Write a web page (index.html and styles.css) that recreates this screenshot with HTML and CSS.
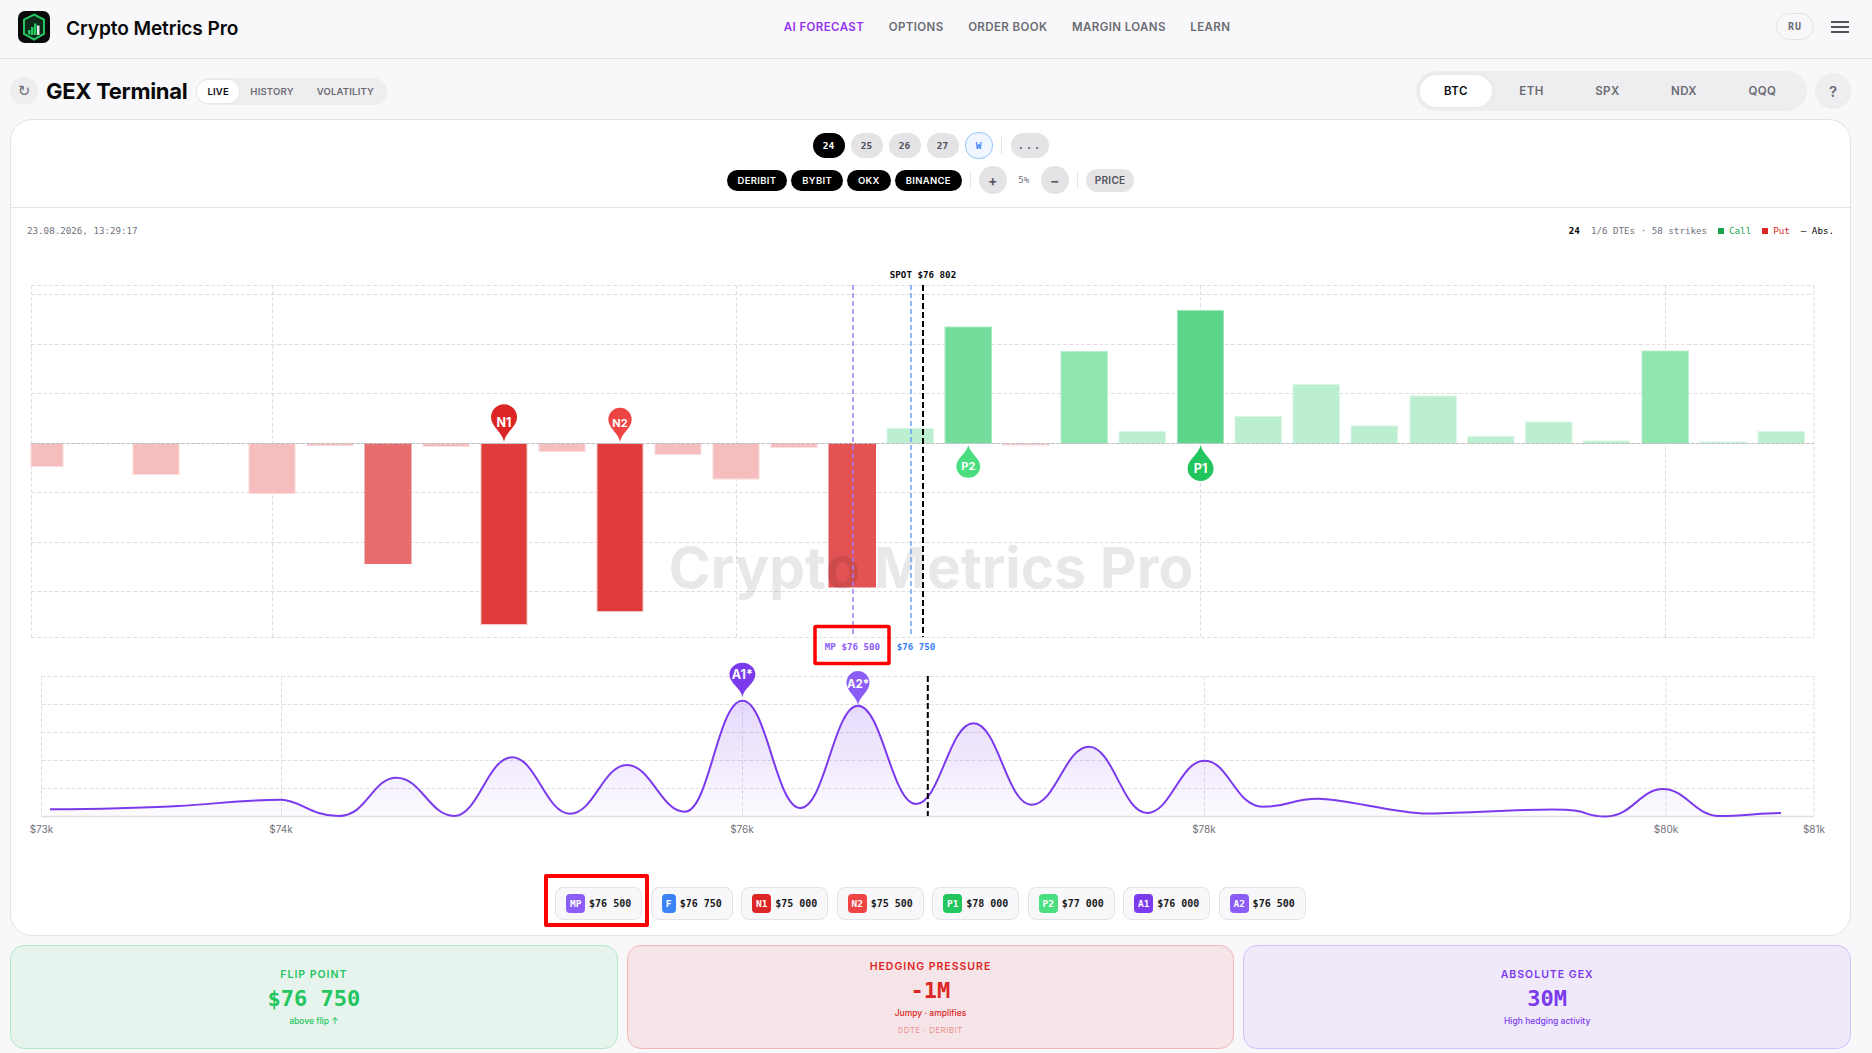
FILE: index.html
```html
<!DOCTYPE html>
<html lang="en">
<head>
<meta charset="utf-8">
<title>Crypto Metrics Pro</title>
<link rel="stylesheet" href="styles.css">
</head>
<body>
<header class="topbar">
  <div class="brand">
    <svg class="logo" viewBox="0 0 32 32" width="32" height="32">
      <rect width="32" height="32" rx="7" fill="#0a0a0a"/>
      <path d="M16 3.5 26 8.5V23L16 28.5 6 23V8.5Z" fill="#0f2a1b" stroke="#22c55e" stroke-width="2"/>
      <rect x="10" y="19" width="2.5" height="4.5" fill="#22c55e"/>
      <rect x="13" y="16" width="2.5" height="8" fill="#22c55e"/>
      <rect x="16" y="12.500" width="2.500" height="11.500" fill="#22c55e"/>
      <rect x="19" y="14.500" width="2.500" height="9.500" fill="#e8e8e8"/>
    </svg>
    <span class="brand-name">Crypto Metrics Pro</span>
  </div>
  <nav class="nav">
    <a class="nav-link nav-active">AI FORECAST</a>
    <a class="nav-link">OPTIONS</a>
    <a class="nav-link">ORDER BOOK</a>
    <a class="nav-link">MARGIN LOANS</a>
    <a class="nav-link">LEARN</a>
  </nav>
  <div class="top-right">
    <span class="lang">RU</span>
    <span class="burger"><i></i><i></i><i></i></span>
  </div>
</header>

<main class="page">
  <div class="title-row">
    <span class="refresh">↻</span>
    <h1 class="page-title">GEX Terminal</h1>
    <div class="seg">
      <span class="seg-item seg-on">LIVE</span>
      <span class="seg-item">HISTORY</span>
      <span class="seg-item">VOLATILITY</span>
    </div>
    <div class="assets">
      <span class="asset asset-on">BTC</span>
      <span class="asset">ETH</span>
      <span class="asset">SPX</span>
      <span class="asset">NDX</span>
      <span class="asset">QQQ</span>
    </div>
    <span class="help">?</span>
  </div>

  <section class="card">
    <div class="toolbar">
      <div class="tool-row">
        <span class="dte dte-on">24</span>
        <span class="dte">25</span>
        <span class="dte">26</span>
        <span class="dte">27</span>
        <span class="dte dte-w">W</span>
        <span class="vsep"></span>
        <span class="dte dte-more">...</span>
      </div>
      <div class="tool-row tool-row-2">
        <span class="ex">DERIBIT</span>
        <span class="ex">BYBIT</span>
        <span class="ex">OKX</span>
        <span class="ex">BINANCE</span>
        <span class="vsep vsep-2"></span>
        <span class="zoom">+</span>
        <span class="pct">5%</span>
        <span class="zoom">−</span>
        <span class="vsep vsep-2"></span>
        <span class="price">PRICE</span>
      </div>
    </div>

    <div class="meta">
      <span>23.08.2026, 13:29:17</span>
      <div class="meta-right">
        <b class="meta-dte">24</b>
        <span>1/6 DTEs · 58 strikes</span>
        <span class="lg lg-call"><i></i>Call</span>
        <span class="lg lg-put"><i></i>Put</span>
        <span class="lg-abs">— Abs.</span>
      </div>
    </div>

    <svg class="chart" viewBox="11 250 1839 600" width="1839" height="600">
      <defs>
        <path id="pin" d="M0 0C-2-10-13-15-13-24.400A13 13 0 1 1 13-24.400C13-15 2-10 0 0Z"/>
        <linearGradient id="area" x1="0" y1="700" x2="0" y2="816" gradientUnits="userSpaceOnUse">
          <stop offset="0" stop-color="#7c3aed" stop-opacity=".2"/>
          <stop offset="1" stop-color="#7c3aed" stop-opacity=".02"/>
        </linearGradient>
      </defs>

      <g class="grid">
        <path d="M31 285.500H1814M31 294.500H1814M31 344.500H1814M31 393.500H1814M31 492.500H1814M31 542.500H1814M31 591.500H1814M31 637.500H1814"/>
        <path d="M31.500 285V638M272.500 285V638M736.500 285V638M1200.500 285V638M1665.500 285V638M1814 285V638"/>
      </g>

      <g>
        <rect class="bar r-low" x="31" y="443.500" width="32" height="23"/>
        <rect class="bar r-low" x="133" y="443.500" width="46" height="31"/>
        <rect class="bar r-low" x="249" y="443.500" width="46" height="50"/>
        <rect class="bar r-low" x="307" y="443.500" width="46" height="2"/>
        <rect class="bar r-mid" x="365" y="443.500" width="46" height="120"/>
        <rect class="bar r-low" x="423" y="443.500" width="46" height="3"/>
        <rect class="bar r-top" x="481" y="443.500" width="46" height="181"/>
        <rect class="bar r-low" x="539" y="443.500" width="46" height="8"/>
        <rect class="bar r-top" x="597" y="443.500" width="46" height="168"/>
        <rect class="bar r-low" x="655" y="443.500" width="46" height="11"/>
        <rect class="bar r-low" x="713" y="443.500" width="46" height="35.500"/>
        <rect class="bar r-low" x="771" y="443.500" width="46" height="4"/>
        <rect class="bar r-hi" x="829" y="443.500" width="46.500" height="143.500"/>
        <rect class="bar g-low" x="887" y="428.500" width="46.500" height="15"/>
        <rect class="bar g-hi" x="945" y="327" width="46.500" height="116.500"/>
        <rect class="bar r-low" x="1003" y="443.500" width="46.500" height="1.500"/>
        <rect class="bar g-mid" x="1061" y="351.500" width="46.500" height="92"/>
        <rect class="bar g-low" x="1119" y="431.500" width="46.500" height="12"/>
        <rect class="bar g-top" x="1177.500" y="310.500" width="46" height="133"/>
        <rect class="bar g-low" x="1235" y="416.500" width="46.500" height="27"/>
        <rect class="bar g-low" x="1293" y="384.500" width="46.500" height="59"/>
        <rect class="bar g-low" x="1351" y="426" width="46.500" height="17.500"/>
        <rect class="bar g-low" x="1410" y="396" width="46.500" height="47.500"/>
        <rect class="bar g-low" x="1467.500" y="436.500" width="46.500" height="7"/>
        <rect class="bar g-low" x="1525.500" y="422" width="46.500" height="21.500"/>
        <rect class="bar g-low" x="1583.500" y="441" width="46.500" height="2.500"/>
        <rect class="bar g-mid" x="1642" y="351" width="46.500" height="92.500"/>
        <rect class="bar g-low" x="1700" y="442" width="46.500" height="1.500"/>
        <rect class="bar g-low" x="1758" y="431.500" width="46.500" height="12"/>
      </g>
      <path class="zero" d="M31 443.500H1814"/>

      <text class="watermark" x="931" y="588">Crypto Metrics Pro</text>

      <path class="line-mp" d="M853 285V637"/>
      <path class="line-flip" d="M911 285V637"/>
      <path class="line-spot" d="M923 285V637"/>
      <text class="t-spot" x="923" y="278">SPOT $76 802</text>
      <text class="t-mp" x="852.500" y="650">MP $76 500</text>
      <text class="t-flip" x="916" y="650">$76 750</text>

      <g transform="translate(504 441.700)"><use href="#pin" class="pin-n1"/><text class="pin-text" y="-15">N1</text></g>
      <g transform="translate(620 441.700)"><use href="#pin" class="pin-n2" transform="scale(.9 .91)"/><text class="pin-text pin-sm" y="-14.500">N2</text></g>
      <g transform="translate(968.300 445)"><use href="#pin" class="pin-p2" transform="scale(.92 -.875)"/><text class="pin-text pin-sm" y="25">P2</text></g>
      <g transform="translate(1200.600 445)"><use href="#pin" class="pin-p1" transform="scale(1 -.96)"/><text class="pin-text" y="27.500">P1</text></g>

      <g class="grid">
        <path d="M41.500 676.500H1814M41.500 704.500H1814M41.500 732.500H1814M41.500 760.500H1814M41.500 788.500H1814"/>
        <path d="M41.500 676V816M281.500 676V816M742.500 676V816M1204.500 676V816M1666 676V816M1814 676V816"/>
      </g>
      <path class="axis" d="M41 816.500H1814"/>
      <path class="area" d="M50 809.300C100 809 140 808 178 806C215 804 245 799.700 281 799.700C300 799.700 310 816 338.700 816S372 777.700 396.500 777.700S430 816 454 816S488 757.300 512 757.300S546 813.700 570 813.700S603 765 627 765S661 811.700 685 811.700S718 700.700 742.400 700.700S776 808 800.400 808S834 705.700 858 705.700S892 804 916 804S949 723.300 973.500 723.300S1007 804.700 1031.400 804.700S1065 746.700 1089 746.700S1123 813 1147 813S1180 760.700 1204.500 760.700S1235 806.700 1263 806.700S1290 798.700 1318 798.700S1395 813.500 1427 813.500S1510 809.500 1552 809.500S1580 816.500 1606 816.500S1640 789 1663 789S1695 816 1719 816S1760 813 1781 813V816H50Z"/>
      <path class="curve" d="M50 809.300C100 809 140 808 178 806C215 804 245 799.700 281 799.700C300 799.700 310 816 338.700 816S372 777.700 396.500 777.700S430 816 454 816S488 757.300 512 757.300S546 813.700 570 813.700S603 765 627 765S661 811.700 685 811.700S718 700.700 742.400 700.700S776 808 800.400 808S834 705.700 858 705.700S892 804 916 804S949 723.300 973.500 723.300S1007 804.700 1031.400 804.700S1065 746.700 1089 746.700S1123 813 1147 813S1180 760.700 1204.500 760.700S1235 806.700 1263 806.700S1290 798.700 1318 798.700S1395 813.500 1427 813.500S1510 809.500 1552 809.500S1580 816.500 1606 816.500S1640 789 1663 789S1695 816 1719 816S1760 813 1781 813"/>
      <path class="line-spot" d="M927.800 676V816"/>

      <g transform="translate(742.400 696.700)"><use href="#pin" class="pin-a1" transform="scale(1 .91)"/><text class="pin-text pin-lg" y="-17.500">A1*</text></g>
      <g transform="translate(858 705)"><use href="#pin" class="pin-a2" transform="scale(.885 .91)"/><text class="pin-text pin-a" y="-17.500">A2*</text></g>

      <text class="tick" x="41.500" y="832.500">$73k</text>
      <text class="tick" x="281" y="832.500">$74k</text>
      <text class="tick" x="742" y="832.500">$76k</text>
      <text class="tick" x="1204" y="832.500">$78k</text>
      <text class="tick" x="1666" y="832.500">$80k</text>
      <text class="tick" x="1814" y="832.500">$81k</text>

      <rect class="callout" x="815" y="626.500" width="74" height="37" rx="1"/>
    </svg>

    <div class="chips">
      <span class="chip chip-marked"><b class="tag tag-mp">MP</b>$76 500<i class="callout-box"></i></span>
      <span class="chip"><b class="tag tag-f">F</b>$76 750</span>
      <span class="chip"><b class="tag tag-n1">N1</b>$75 000</span>
      <span class="chip"><b class="tag tag-n2">N2</b>$75 500</span>
      <span class="chip"><b class="tag tag-p1">P1</b>$78 000</span>
      <span class="chip"><b class="tag tag-p2">P2</b>$77 000</span>
      <span class="chip"><b class="tag tag-a1">A1</b>$76 000</span>
      <span class="chip"><b class="tag tag-a2">A2</b>$76 500</span>
    </div>
  </section>

  <section class="stats">
    <div class="stat stat-green">
      <div class="stat-label">FLIP POINT</div>
      <div class="stat-value">$76 750</div>
      <div class="stat-sub">above flip ↑</div>
    </div>
    <div class="stat stat-red">
      <div class="stat-label">HEDGING PRESSURE</div>
      <div class="stat-value">-1M</div>
      <div class="stat-sub">Jumpy · amplifies</div>
      <div class="stat-note">0DTE · DERIBIT</div>
    </div>
    <div class="stat stat-purple">
      <div class="stat-label">ABSOLUTE GEX</div>
      <div class="stat-value">30M</div>
      <div class="stat-sub">High hedging activity</div>
    </div>
  </section>
</main>
</body>
</html>
```

FILE: styles.css
```css
* { box-sizing: border-box; }

html, body { height: 100%; }

body {
  margin: 0;
  overflow: hidden;
  background: #f8f8fa;
  color: #09090b;
  font-family: "Inter", "Liberation Sans", sans-serif;
}

/* Top bar */
.topbar {
  height: 59px;
  padding: 0 23px 0 18px;
  display: flex;
  align-items: center;
  justify-content: space-between;
  border-bottom: 1px solid #e4e4e7;
}

.brand { display: flex; align-items: center; gap: 16px; }
.logo { display: block; margin-top: -4px; }
.brand-name { font-size: 19.100px; font-weight: 600; letter-spacing: -.1px; margin-top: -2px; }

.nav { display: flex; gap: 24.500px; margin-top: -4px; }
.nav-link { font-size: 11.500px; font-weight: 600; letter-spacing: .4px; color: #6b6b73; }
.nav-active { color: #9333ea; }

.top-right { display: flex; align-items: center; gap: 17px; margin-top: -5px; }
.lang {
  width: 38px;
  height: 27px;
  display: flex;
  align-items: center;
  justify-content: center;
  border: 1px solid #e4e4e7;
  border-radius: 14px;
  font-family: "DejaVu Sans Mono", monospace;
  font-size: 10px;
  font-weight: 600;
  letter-spacing: 1px;
  color: #6b6b73;
}
.burger { width: 18px; display: flex; flex-direction: column; gap: 3px; }
.burger i { display: block; height: 2px; background: #52525b; }

/* Page */
.page { padding: 0 21px 0 10px; }

.title-row { height: 60px; display: flex; align-items: center; }
.refresh {
  width: 28px;
  height: 28px;
  border-radius: 50%;
  background: #eeeef0;
  color: #71717a;
  display: flex;
  align-items: center;
  justify-content: center;
  font-size: 15px;
  font-family: "DejaVu Sans", sans-serif;
  margin-top: 4px;
}
.page-title { margin: 4px 0 0 8px; font-size: 22px; font-weight: 700; letter-spacing: -.3px; }

.seg {
  margin: 4px 0 0 9px;
  height: 27px;
  padding: 2px 1px;
  width: 191px;
  display: flex;
  align-items: center;
  background: #eeeef0;
  border-radius: 14px;
}
.seg-item { font-size: 9.500px; font-weight: 600; letter-spacing: .2px; color: #6b6b73; padding: 0 11.500px; height: 23px; display: flex; align-items: center; }
.seg-on { background: #fff; color: #09090b; border-radius: 12px; padding: 0 10px; box-shadow: 0 0 3px rgba(0,0,0,.06); }

.assets {
  margin: 4px 0 0 auto;
  width: 390.500px;
  height: 40px;
  padding: 4px;
  display: flex;
  align-items: center;
  gap: 3.500px;
  background: #eeeef0;
  border-radius: 20px;
}
.asset { height: 32px; padding: 0 24px; display: flex; align-items: center; justify-content: center; font-size: 11.500px; font-weight: 600; letter-spacing: .4px; color: #6b6b73; }
.asset-on { background: #fff; color: #09090b; border-radius: 16px; box-shadow: 0 0 6px rgba(0,0,0,.05); }

.help {
  width: 36px;
  height: 36px;
  margin: 4px 0 0 8.500px;
  border-radius: 50%;
  background: #eeeef0;
  color: #6b6b73;
  display: flex;
  align-items: center;
  justify-content: center;
  font-size: 15px;
  font-weight: 600;
}

/* Main card */
.card {
  height: 817px;
  background: #fff;
  border: 1px solid #e4e4e7;
  border-radius: 22px;
}

.toolbar {
  height: 88px;
  padding-top: 11px;
  border-bottom: 1px solid #e4e4e7;
  display: flex;
  flex-direction: column;
  align-items: center;
  gap: 7px;
}
.tool-row { height: 28px; display: flex; align-items: center; gap: 6px; }
.tool-row-2 { gap: 4px; }

.dte {
  width: 32px;
  height: 25px;
  display: flex;
  align-items: center;
  justify-content: center;
  border-radius: 13px;
  background: #e4e4e7;
  color: #52525b;
  font-family: "DejaVu Sans Mono", monospace;
  font-size: 9.500px;
  font-weight: 600;
}
.dte-on { background: #000; color: #fff; }
.dte-w { width: 28px; height: 27px; background: #eff6ff; border: 1px solid #93c5fd; color: #3b82f6; }
.dte-more { width: 38px; margin-left: 3px; font-size: 12px; font-weight: 400; letter-spacing: 1px; }

.vsep { width: 1px; height: 17px; background: #e4e4e7; margin-left: 2px; }
.vsep-2 { margin: 0 4px; }

.ex {
  height: 21px;
  padding: 0 11px;
  display: flex;
  align-items: center;
  border-radius: 11px;
  background: #000;
  color: #fff;
  font-size: 9.500px;
  font-weight: 600;
  letter-spacing: .3px;
}
.zoom {
  width: 28px;
  height: 28px;
  display: flex;
  align-items: center;
  justify-content: center;
  border-radius: 50%;
  background: #e4e4e7;
  color: #52525b;
  font-size: 14px;
  font-weight: 600;
}
.pct { width: 26px; text-align: center; font-family: "DejaVu Sans Mono", monospace; font-size: 9px; color: #71717a; margin-top: -1px; }
.price {
  height: 23px;
  padding: 0 9px;
  display: flex;
  align-items: center;
  border-radius: 12px;
  background: #e4e4e7;
  color: #52525b;
  font-size: 10px;
  font-weight: 600;
  letter-spacing: .3px;
}

.meta {
  height: 42px;
  padding: 3px 16px 0 16px;
  display: flex;
  align-items: center;
  justify-content: space-between;
  font-family: "DejaVu Sans Mono", monospace;
  font-size: 9.200px;
  color: #71717a;
}
.meta-right { display: flex; align-items: center; gap: 11px; }
.meta-dte { color: #09090b; }
.lg { display: flex; align-items: center; gap: 5px; }
.lg i { width: 6px; height: 6px; display: block; }
.lg-call { color: #16a34a; }
.lg-call i { background: #16a34a; }
.lg-put { color: #dc2626; }
.lg-put i { background: #dc2626; }
.lg-abs { color: #09090b; }

/* Chart */
.chart { display: block; }
.grid path { fill: none; stroke: #e0e0e2; stroke-width: 1; stroke-dasharray: 4 2; }

.bar { stroke-width: 1; }
.r-low { fill: #f5bdbd; stroke: #fadcdc; }
.r-mid { fill: #e76c6d; stroke: #e76c6d; }
.r-hi { fill: #e35353; stroke: #e35353; }
.r-top { fill: #e03c3c; stroke: #f5c6c6; }
.g-low { fill: #bcefcf; stroke: #daf6e5; }
.g-mid { fill: #91e5ae; stroke: #b9efcc; }
.g-hi { fill: #74dc9a; stroke: #a9e9c1; }
.g-top { fill: #5dd58a; stroke: #a0e6ba; }

.zero { stroke: #c2c2c6; stroke-width: 1; stroke-dasharray: 4 1; fill: none; }
.axis { stroke: #e0e0e2; stroke-width: 1.500; fill: none; }

.watermark {
  font-family: "Inter", "Liberation Sans", sans-serif;
  font-size: 57px;
  font-weight: 700;
  fill: #000;
  fill-opacity: .09;
  text-anchor: middle;
}

.line-mp { stroke: #a27cf5; stroke-width: 1.500; stroke-dasharray: 5 3; fill: none; }
.line-flip { stroke: #6ea0f8; stroke-width: 1.500; stroke-dasharray: 5 3; fill: none; }
.line-spot { stroke: #000; stroke-width: 2; stroke-dasharray: 6 3; fill: none; }

.t-spot, .t-mp, .t-flip { font-family: "DejaVu Sans Mono", monospace; font-size: 9.200px; text-anchor: middle; }
.t-spot { fill: #09090b; font-weight: 600; }
.t-mp { fill: #8b5cf6; font-weight: 600; }
.t-flip { fill: #3b82f6; font-weight: 600; }

.pin-n1 { fill: #dc2626; }
.pin-n2 { fill: #ef4444; }
.pin-p1 { fill: #22c55e; }
.pin-p2 { fill: #4ade80; }
.pin-a1 { fill: #7c3aed; }
.pin-a2 { fill: #8b5cf6; }
.pin-text {
  font-family: "Inter", "Liberation Sans", sans-serif;
  font-size: 12.500px;
  font-weight: 700;
  fill: #fff;
  text-anchor: middle;
}
.pin-sm { font-size: 11px; }
.pin-lg { font-size: 12.500px; }
.pin-a { font-size: 11.500px; }

.area { fill: url(#area); stroke: none; }
.curve { fill: none; stroke: #7c3aed; stroke-width: 2; }

.tick { font-family: "Inter", "Liberation Sans", sans-serif; font-size: 10px; fill: #71717a; text-anchor: middle; }

.callout { fill: none; stroke: #ff0000; stroke-width: 3.500; }

/* Strike chips */
.chips { display: flex; justify-content: center; gap: 8.500px; margin-top: 37px; }
.chip {
  position: relative;
  height: 33px;
  padding: 0 10px;
  display: flex;
  align-items: center;
  gap: 4px;
  background: #f8f8fa;
  border: 1px solid #e4e4e7;
  border-radius: 8px;
  font-family: "DejaVu Sans Mono", monospace;
  font-size: 10px;
  font-weight: 600;
  color: #18181b;
}
.tag {
  min-width: 14px;
  height: 19px;
  padding: 0 3.700px;
  display: flex;
  align-items: center;
  justify-content: center;
  border-radius: 4px;
  color: #fff;
  font-size: 9.500px;
}
.tag-mp, .tag-a2 { background: #8b5cf6; }
.tag-f { background: #3b82f6; }
.tag-n1 { background: #dc2626; }
.tag-n2 { background: #ef4444; }
.tag-p1 { background: #22c55e; }
.tag-p2 { background: #4ade80; }
.tag-a1 { background: #7c3aed; }

.callout-box {
  position: absolute;
  left: -12px;
  right: -8px;
  top: -14px;
  bottom: -8px;
  border: 4px solid #ff0000;
  border-radius: 2px;
}

/* Stat cards */
.stats { margin-top: 9px; display: grid; grid-template-columns: repeat(3, 1fr); gap: 9px; }
.stat {
  height: 104px;
  display: flex;
  flex-direction: column;
  align-items: center;
  justify-content: center;
  border: 1px solid;
  border-radius: 14px;
}
.stat-label { font-size: 10.500px; font-weight: 600; letter-spacing: 1px; }
.stat-value { margin-top: 3px; font-family: "DejaVu Sans Mono", monospace; font-size: 22px; font-weight: 700; line-height: 30px; }
.stat-sub { margin-top: 2px; font-size: 8.500px; font-weight: 500; }
.stat-note { margin-top: 7px; font-size: 8px; letter-spacing: .5px; opacity: .45; }

.stat-green { background: #e7f4ed; border-color: #b3e8c9; color: #22c55e; }
.stat-red { background: #f6e5e8; border-color: #f5b5b8; color: #dc2626; }
.stat-purple { background: #efe9fa; border-color: #d0c2f9; color: #7c3aed; }
```
